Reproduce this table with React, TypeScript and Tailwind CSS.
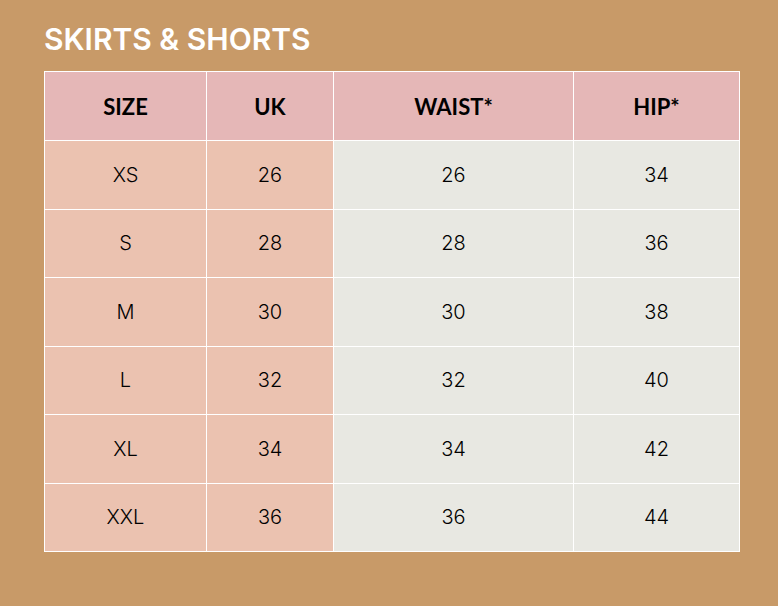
const rows = [
  ['XS', '26', '26', '34'],
  ['S', '28', '28', '36'],
  ['M', '30', '30', '38'],
  ['L', '32', '32', '40'],
  ['XL', '34', '34', '42'],
  ['XXL', '36', '36', '44'],
]

export default function App() {
  return (
    <div className="min-h-[606px] w-[778px] bg-[#c89a68] pl-[44px] pt-[21px]">
      <h1 className="mb-[14px] font-['Inter',sans-serif] text-[30px] leading-[36px] font-semibold tracking-[0px] text-white">
        SKIRTS &amp; SHORTS
      </h1>
      <table className="w-[695px] table-fixed border-collapse border border-white font-['Inter',sans-serif] text-[20px] text-black">
        <colgroup>
          <col className="w-[162px]" />
          <col className="w-[127px]" />
          <col className="w-[240px]" />
          <col className="w-[166px]" />
        </colgroup>
        <thead>
          <tr className="h-[69px] bg-[#e5b7b7]">
            {['SIZE', 'UK', 'WAIST*', 'HIP*'].map((h) => (
              <th key={h} className="border border-white text-center font-['Lato',sans-serif] text-[22px] font-bold">
                {h}
              </th>
            ))}
          </tr>
        </thead>
        <tbody>
          {rows.map((r) => (
            <tr key={r[0]} className="h-[68.5px]">
              <td className="border border-white bg-[#ebc2b0] text-center font-light">{r[0]}</td>
              <td className="border border-white bg-[#ebc2b0] text-center font-light">{r[1]}</td>
              <td className="border border-white bg-[#e8e8e2] text-center font-light">{r[2]}</td>
              <td className="border border-white bg-[#e8e8e2] text-center font-light">{r[3]}</td>
            </tr>
          ))}
        </tbody>
      </table>
    </div>
  )
}
